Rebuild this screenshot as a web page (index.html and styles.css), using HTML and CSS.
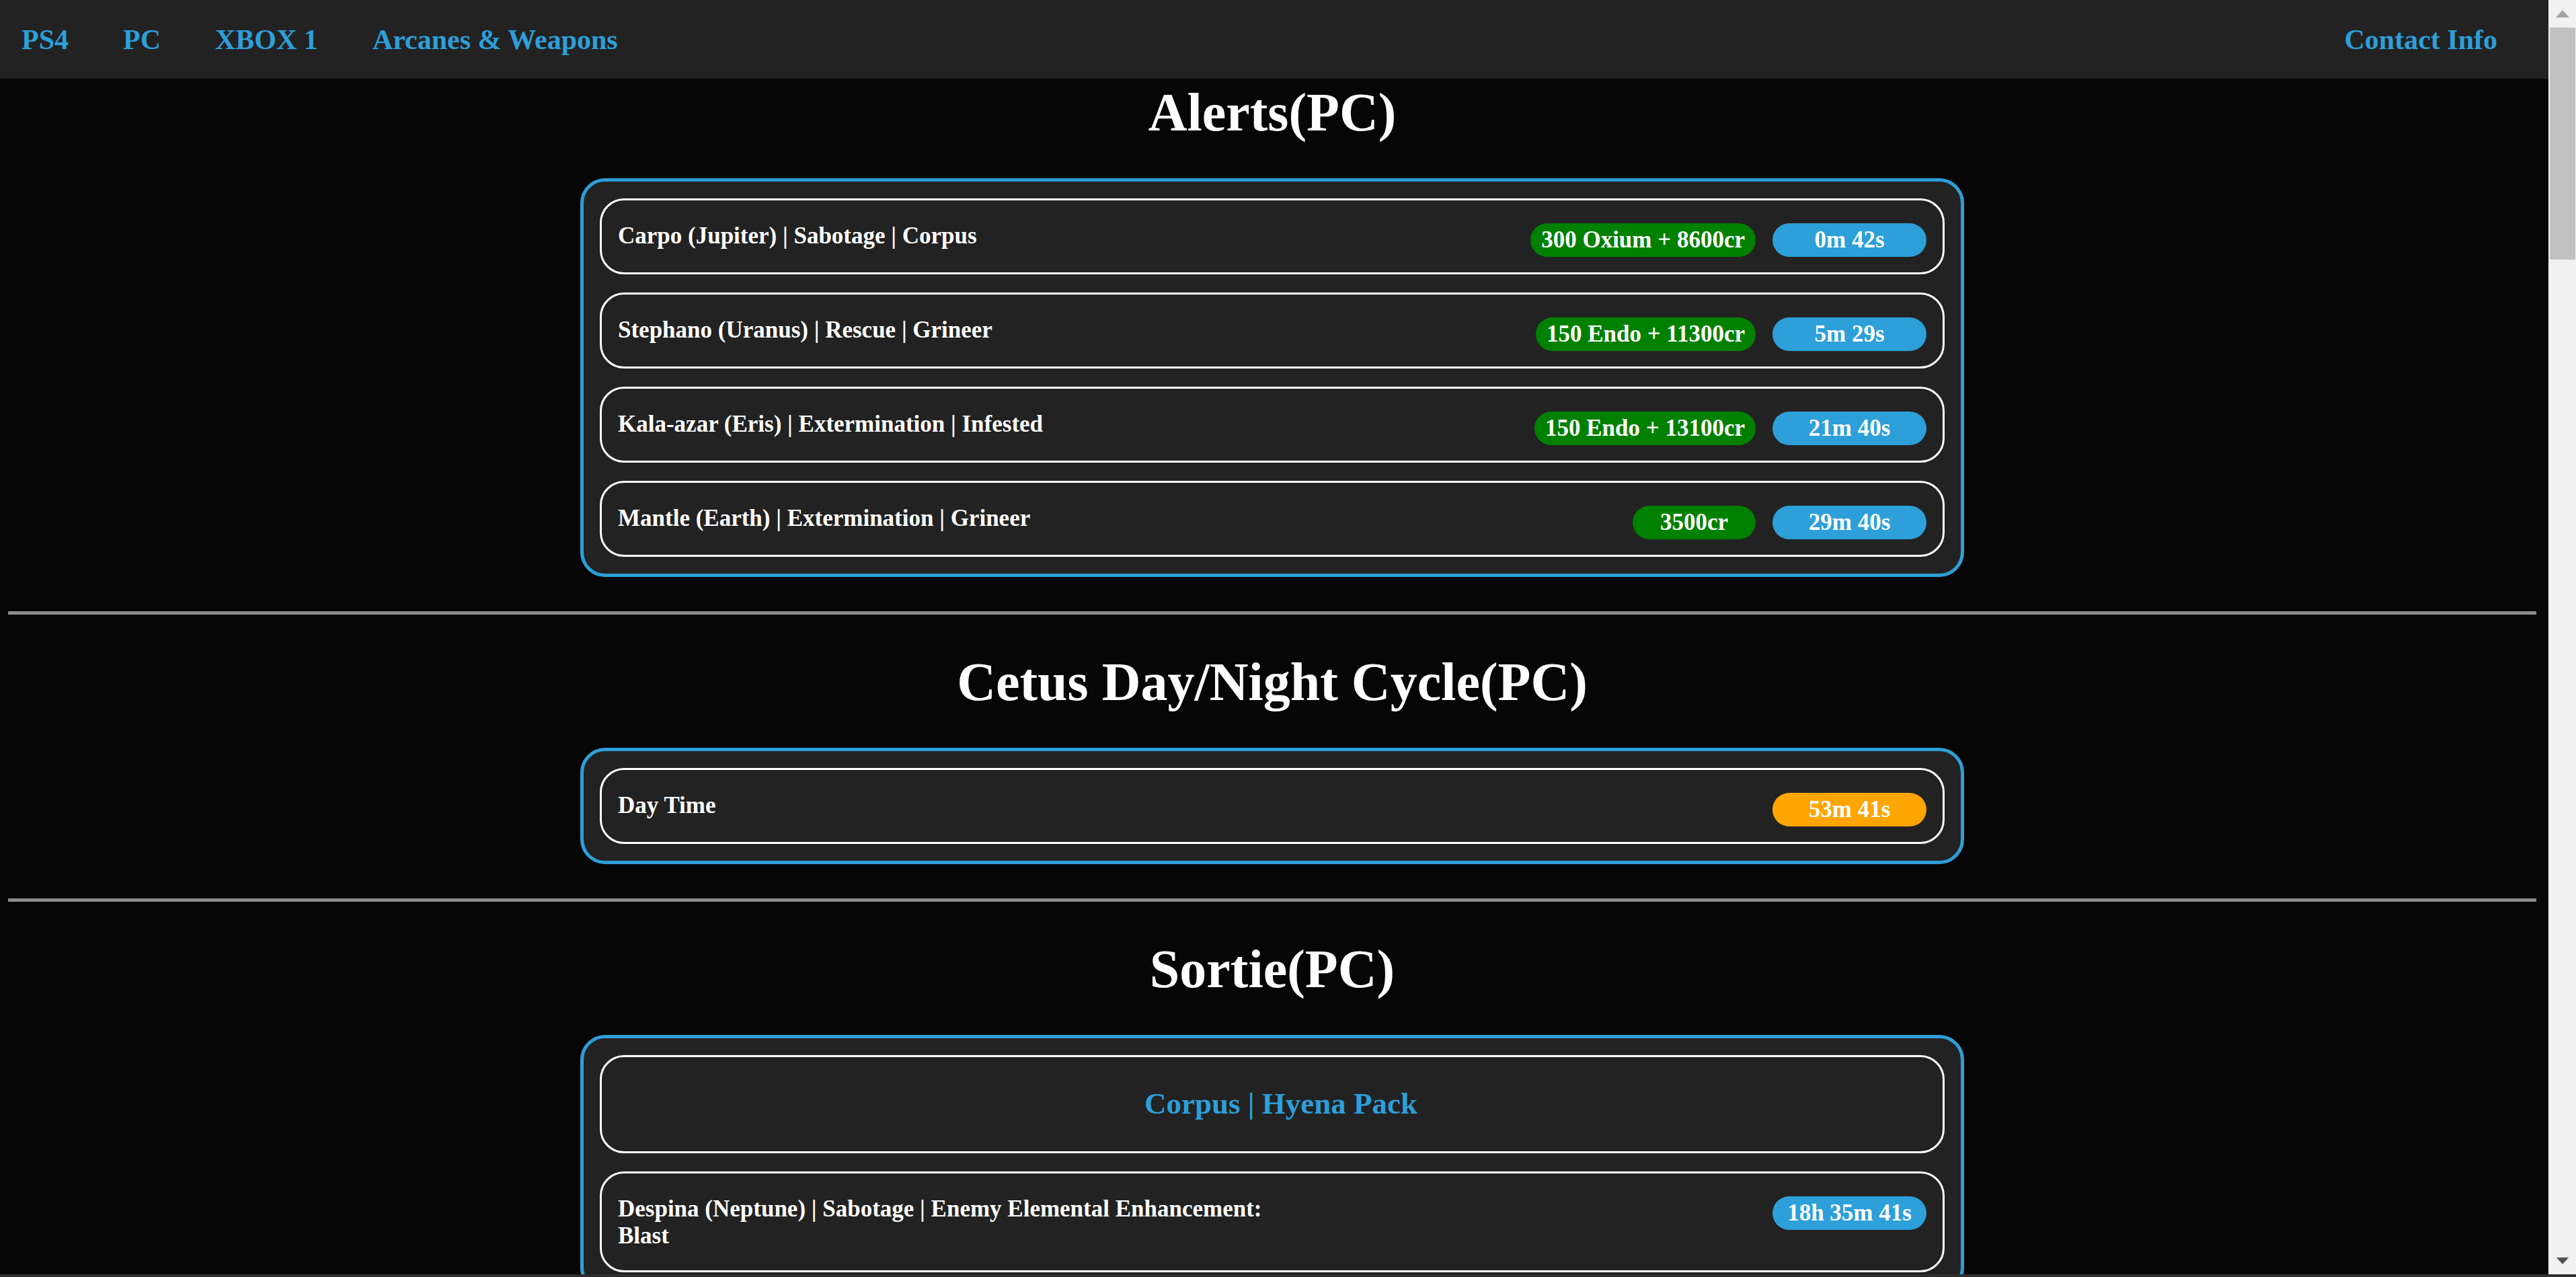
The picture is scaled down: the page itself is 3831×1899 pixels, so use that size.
FILE: index.html
```html
<!DOCTYPE html>
<html lang="en">
<head>
<meta charset="utf-8">
<title>Warframe Tracker</title>
<link rel="stylesheet" href="styles.css">
</head>
<body>
<div class="screen">
  <div class="window">
    <div class="viewport">
      <nav class="topnav">
        <a class="nav-link" href="#">PS4</a>
        <a class="nav-link" href="#">PC</a>
        <a class="nav-link" href="#">XBOX 1</a>
        <a class="nav-link" href="#">Arcanes &amp; Weapons</a>
        <a class="nav-link nav-right" href="#">Contact Info</a>
      </nav>
      <main class="content">
        <section class="block">
          <h1 class="block-title">Alerts(PC)</h1>
          <div class="panel">
            <div class="row">
              <div class="mission">Carpo (Jupiter) | Sabotage | Corpus</div>
              <div class="badges">
                <span class="badge reward">300 Oxium + 8600cr</span>
                <span class="badge timer">0m 42s</span>
              </div>
            </div>
            <div class="row">
              <div class="mission">Stephano (Uranus) | Rescue | Grineer</div>
              <div class="badges">
                <span class="badge reward">150 Endo + 11300cr</span>
                <span class="badge timer">5m 29s</span>
              </div>
            </div>
            <div class="row">
              <div class="mission">Kala-azar (Eris) | Extermination | Infested</div>
              <div class="badges">
                <span class="badge reward">150 Endo + 13100cr</span>
                <span class="badge timer">21m 40s</span>
              </div>
            </div>
            <div class="row">
              <div class="mission">Mantle (Earth) | Extermination | Grineer</div>
              <div class="badges">
                <span class="badge reward">3500cr</span>
                <span class="badge timer">29m 40s</span>
              </div>
            </div>
          </div>
        </section>
        <hr class="divider">
        <section class="block">
          <h1 class="block-title">Cetus Day/Night Cycle(PC)</h1>
          <div class="panel">
            <div class="row">
              <div class="mission">Day Time</div>
              <div class="badges">
                <span class="badge timer day">53m 41s</span>
              </div>
            </div>
          </div>
        </section>
        <hr class="divider">
        <section class="block">
          <h1 class="block-title">Sortie(PC)</h1>
          <div class="panel">
            <div class="row row-head">
              <h3 class="sortie-boss">Corpus | Hyena Pack</h3>
            </div>
            <div class="row">
              <div class="mission">Despina (Neptune) | Sabotage | Enemy Elemental Enhancement: Blast</div>
              <div class="badges">
                <span class="badge timer">18h 35m 41s</span>
              </div>
            </div>
          </div>
        </section>
      </main>
    </div>
    <div class="scrollbar">
      <div class="sb-button">
        <svg width="20" height="11" viewBox="0 0 20 11"><polygon points="10,0 20,11 0,11" fill="#a3a3a3"/></svg>
      </div>
      <div class="sb-track">
        <div class="sb-thumb"></div>
      </div>
      <div class="sb-button">
        <svg width="18" height="10" viewBox="0 0 18 10"><polygon points="0,0 18,0 9,10" fill="#505050"/></svg>
      </div>
    </div>
  </div>
  <div class="screen-edge"></div>
</div>
</body>
</html>
```
FILE: styles.css
```css
html, body {
  margin: 0;
  padding: 0;
  height: 100%;
  overflow: hidden;
}

body {
  background: #060606;
  font-family: "Liberation Serif", "Times New Roman", serif;
  color: #ffffff;
}

.screen {
  height: 1899px;
  display: flex;
  flex-direction: column;
}

.window {
  flex: 1;
  min-height: 0;
  display: flex;
}

.viewport {
  flex: 1;
  min-width: 0;
  overflow: hidden;
  background: #060606;
}

/* ---------- navigation ---------- */
.topnav {
  height: 117px;
  box-sizing: border-box;
  background: #222222;
  display: flex;
  align-items: flex-start;
  gap: 81px;
  padding: 35px 76px 0 32px;
}

.nav-link {
  font-size: 42px;
  line-height: 48px;
  font-weight: bold;
  color: #2d9fd9;
  text-decoration: none;
  white-space: nowrap;
}

.nav-right {
  margin-left: auto;
}

/* ---------- content ---------- */
.content {
  padding: 5px 18px 0 12px;
}

.block-title {
  margin: 0 0 53px;
  font-size: 80px;
  line-height: 90px;
  font-weight: bold;
  text-align: center;
  color: #ffffff;
}

.panel {
  width: 2058px;
  box-sizing: border-box;
  margin: 0 auto;
  background: #222222;
  border: 5px solid #2d9fd9;
  border-radius: 37px;
  padding: 25px 24px;
  display: flex;
  flex-direction: column;
  gap: 27px;
}

.row {
  display: flex;
  align-items: flex-start;
  justify-content: space-between;
  border: 3px solid #ffffff;
  border-radius: 36px;
  padding: 22px 24px 23px;
}

.mission {
  margin: 11px 0 8px;
  max-width: 1000px;
  font-size: 35px;
  line-height: 40px;
  font-weight: bold;
  color: #ffffff;
}

.badges {
  display: flex;
  gap: 25px;
  margin-top: 12px;
  flex-shrink: 0;
}

.badge {
  display: block;
  box-sizing: border-box;
  height: 50px;
  padding: 5px 16px;
  border-radius: 25px;
  font-size: 35px;
  line-height: 40px;
  font-weight: bold;
  color: #ffffff;
  text-align: center;
  white-space: nowrap;
}

.reward {
  min-width: 183px;
  background: #008000;
}

.timer {
  width: 229px;
  padding: 5px 0;
  background: #2d9fd9;
}

.timer.day {
  background: #ffa500;
}

.row-head {
  justify-content: center;
  padding: 43px 24px 45px 50px;
}

.sortie-boss {
  margin: 0;
  font-size: 45px;
  line-height: 52px;
  font-weight: bold;
  color: #2d9fd9;
}

.divider {
  height: 5px;
  margin: 51px 0 55px;
  border: 0;
  background: #8c8c8c;
}

/* ---------- fake browser chrome ---------- */
.scrollbar {
  width: 41px;
  flex-shrink: 0;
  display: flex;
  flex-direction: column;
  background: #f1f1f1;
}

.sb-button {
  height: 41px;
  display: flex;
  align-items: center;
  justify-content: center;
}

.sb-track {
  flex: 1;
  padding: 0 1px 0 2px;
}

.sb-thumb {
  height: 345px;
  background: #c1c1c1;
}

.screen-edge {
  height: 4px;
  background: #2e2e2e;
}
```
